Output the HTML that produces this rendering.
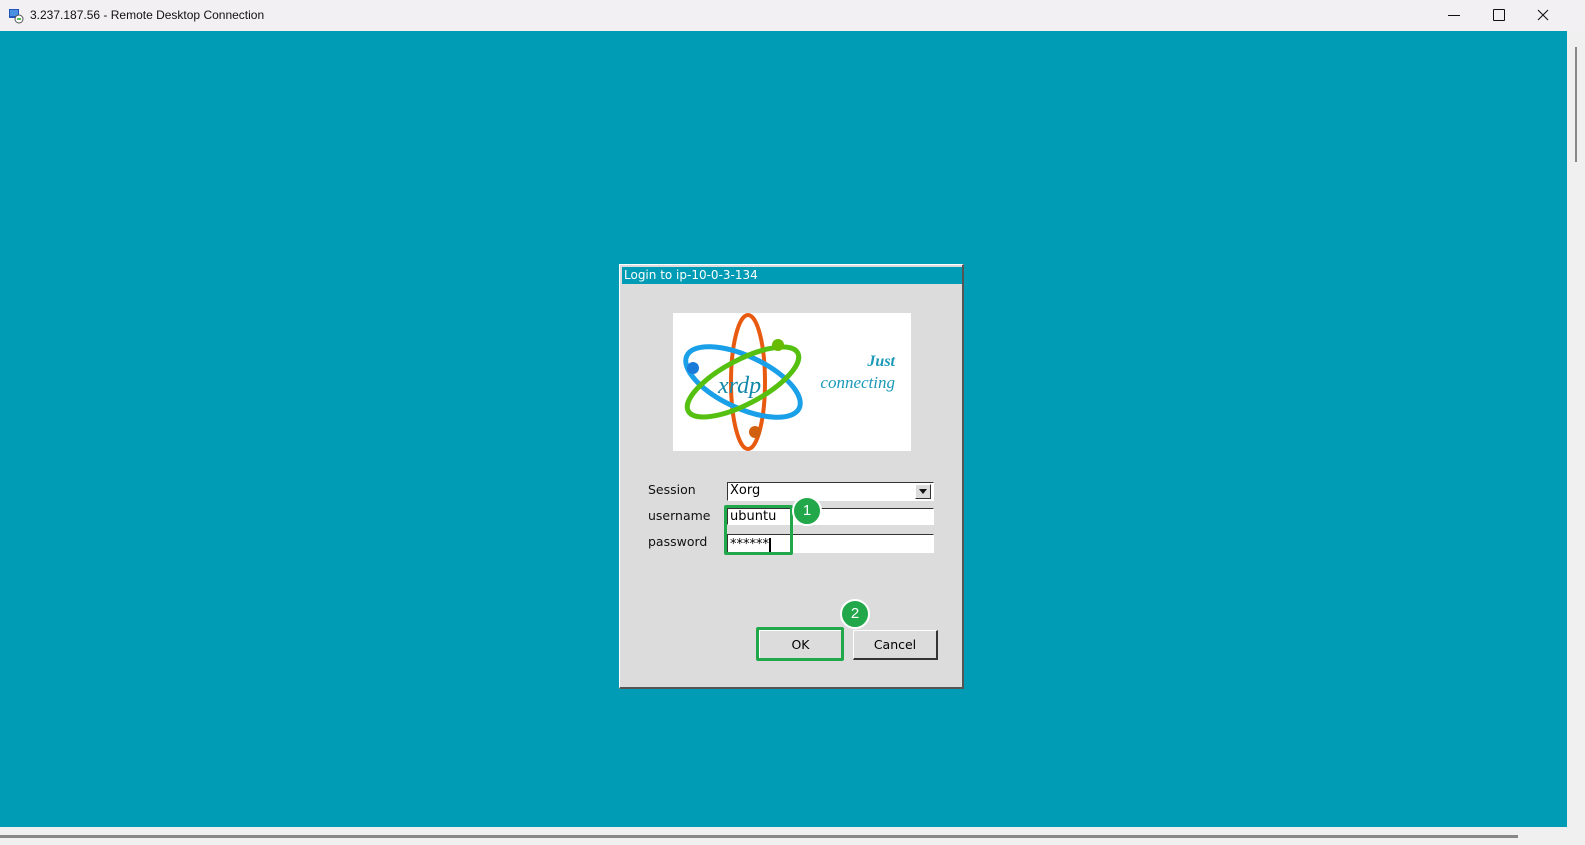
<!DOCTYPE html>
<html><head><style>
body{margin:0;width:1585px;height:845px;overflow:hidden;background:#f0f0f0;font-family:"Liberation Sans","DejaVu Sans",sans-serif;position:relative}
.abs{position:absolute}
.tb{left:0;top:0;width:1585px;height:31px;background:#f3f0f3}
.teal{left:0;top:31px;width:1567px;height:796px;background:#009bb4}
.dlg{left:619px;top:264px;width:342px;height:422px;background:#dcdcdc;border:1px solid #fff;border-right:2px solid #555;border-bottom:2px solid #555}
.dt{left:2px;top:2px;width:340px;height:17px;background:#009bb4;color:#fff;font-family:"DejaVu Sans",sans-serif;font-size:12px;line-height:17px;padding-left:2px;box-sizing:border-box}
.lbl{font-family:"DejaVu Sans",sans-serif;font-size:12.5px;color:#111}
.inp{background:#fff;border-top:1px solid #333;border-left:1px solid #333;border-bottom:1px solid #fff;border-right:1px solid #fff;height:17px;box-sizing:border-box;font-family:"DejaVu Sans",sans-serif;font-size:13px;line-height:15px;padding-left:2px}
.btn{background:#dcdcdc;border-top:1px solid #fff;border-left:1px solid #fff;border-right:2px solid #333;border-bottom:2px solid #333;box-sizing:border-box;font-family:"DejaVu Sans",sans-serif;font-size:12.5px;text-align:center;line-height:28px}
.gb{border:3px solid #22a84a;border-radius:2px;box-sizing:border-box}
.circ{width:30px;height:30px;border-radius:50%;background:#22a84a;border:2px solid #fff;box-sizing:border-box;color:#fff;font-size:15px;text-align:center;line-height:26px}
</style></head><body>
<div class="abs tb"></div>
<svg class="abs" style="left:8px;top:8px" width="16" height="16"><rect x="1" y="1" width="10" height="9" fill="#2255bb"/><rect x="2" y="2" width="8" height="6" fill="#4a8fe0"/><circle cx="11" cy="11" r="4" fill="#fff" stroke="#555"/><path d="M9 11h4" stroke="#2a2" stroke-width="1.5"/></svg>
<div class="abs" style="left:30px;top:8px;font-size:12px;color:#111">3.237.187.56 - Remote Desktop Connection</div>
<div class="abs" style="left:1448px;top:15px;width:12px;height:1px;background:#111"></div>
<div class="abs" style="left:1493px;top:9px;width:10px;height:10px;border:1px solid #111;border-radius:1px"></div>
<svg class="abs" style="left:1537px;top:9px" width="12" height="12"><path d="M1 1L11 11M11 1L1 11" stroke="#111" stroke-width="1.1"/></svg>
<div class="abs teal"></div>
<div class="abs" style="left:1575px;top:47px;width:2px;height:115px;background:#888"></div>
<div class="abs" style="left:0;top:835px;width:1518px;height:3px;background:#888"></div>
<div class="abs dlg">
<div class="abs dt">Login to ip-10-0-3-134</div>
<div class="abs" style="left:53px;top:48px;width:238px;height:138px;background:#fff">
<svg width="238" height="138">
<ellipse cx="75" cy="69" rx="17" ry="67" fill="none" stroke="#e85a10" stroke-width="4"/>
<ellipse cx="70" cy="69" rx="62" ry="26" transform="rotate(25 70 69)" fill="none" stroke="#1aa0e8" stroke-width="5"/>
<ellipse cx="70" cy="69" rx="62" ry="22" transform="rotate(-28 70 69)" fill="none" stroke="#55c010" stroke-width="5"/>
<circle cx="20" cy="55" r="6" fill="#1a7ad8"/><circle cx="105" cy="32" r="6" fill="#66bb00"/><circle cx="82" cy="119" r="6" fill="#d06010"/>
<text x="45" y="80" font-family="Liberation Serif,serif" font-style="italic" font-size="24" fill="#1288a8">xrdp</text>
<text x="222" y="53" text-anchor="end" font-family="Liberation Serif,serif" font-style="italic" font-weight="bold" font-size="16" fill="#1a9ab8">Just</text>
<text x="222" y="75" text-anchor="end" font-family="Liberation Serif,serif" font-style="italic" font-size="17" fill="#1a9ab8">connecting</text>
</svg></div>
<div class="abs lbl" style="left:28px;top:217px">Session</div>
<div class="abs lbl" style="left:28px;top:243px">username</div>
<div class="abs lbl" style="left:28px;top:269px">password</div>
<div class="abs inp" style="left:107px;top:217px;width:207px;height:19px">Xorg</div>
<div class="abs" style="left:295px;top:219px;width:16px;height:15px;background:#dcdcdc;border:1px solid #fff;border-right-color:#333;border-bottom-color:#333;box-sizing:border-box"><svg width="14" height="13"><path d="M3 4h8l-4 5z" fill="#111"/></svg></div>
<div class="abs inp" style="left:107px;top:243px;width:207px">ubuntu</div>
<div class="abs inp" style="left:107px;top:269px;width:207px;height:19px;font-size:13px;line-height:19px">******<span style="display:inline-block;width:2px;height:14px;background:#000;vertical-align:middle"></span></div>
<div class="abs gb" style="left:104px;top:240px;width:69px;height:50px"></div>
<div class="abs circ" style="left:172px;top:231px">1</div>
<div class="abs btn" style="left:139px;top:365px;width:84px;height:30px">OK</div>
<div class="abs gb" style="left:136px;top:362px;width:88px;height:34px"></div>
<div class="abs circ" style="left:220px;top:334px">2</div>
<div class="abs btn" style="left:233px;top:365px;width:85px;height:30px">Cancel</div>
</div>
</body></html>
